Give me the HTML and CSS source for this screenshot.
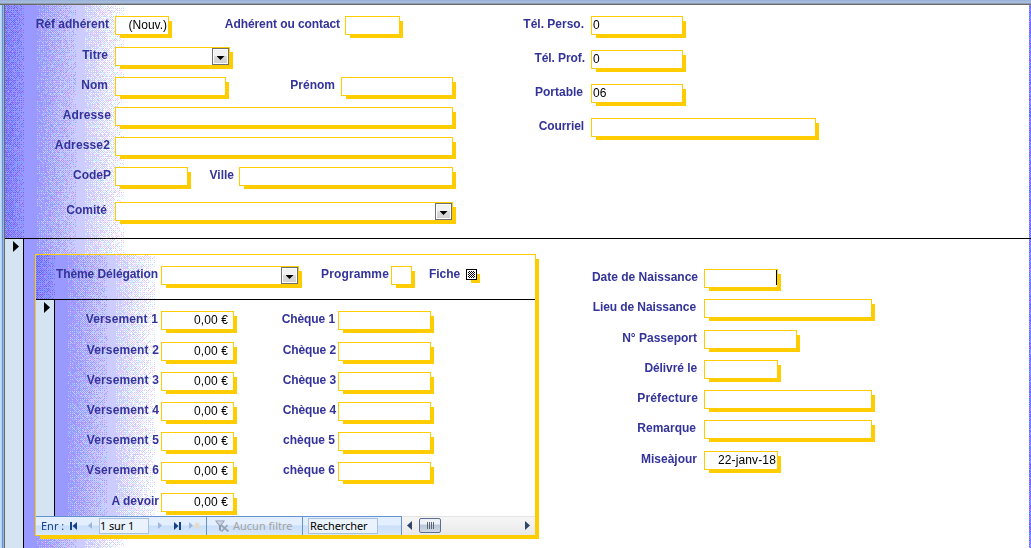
FILE: index.html
```
<!DOCTYPE html>
<html lang="fr">
<head>
<meta charset="utf-8">
<title>Adhérents</title>
<link rel="stylesheet" href="styles.css">
</head>
<body>
<div class="window">
  <div class="topbar"></div>
  <div class="middle">
    <div class="leftbar"></div>
    <main class="form">
      <canvas class="backdrop" width="1026" height="543"></canvas>
      <section class="head">
        <div class="identity">
          <div class="row c-ref"><label class="g6">Réf adhérent</label><span class="field right">(Nouv.)</span><label class="g5 tight">Adhérent ou contact</label><span class="field"></span></div>
          <div class="row c-titre"><label class="g7">Titre</label><span class="field combo"><i class="drop"></i></span></div>
          <div class="row c-nom"><label class="g7">Nom</label><span class="field"></span><label class="g6">Prénom</label><span class="field"></span></div>
          <div class="row c-wide"><label class="g4 loose">Adresse</label><span class="field"></span></div>
          <div class="row c-wide"><label class="g5 loose">Adresse2</label><span class="field"></span></div>
          <div class="row c-ville"><label class="g4">CodeP</label><span class="field"></span><label class="g5">Ville</label><span class="field"></span></div>
          <div class="row c-wide"><label class="g8">Comité</label><span class="field combo"><i class="drop"></i></span></div>
        </div>
        <div class="phones">
          <div class="row c-tel"><label class="g7">Tél. Perso.</label><span class="field">0</span></div>
          <div class="row c-tel"><label class="g6 tight">Tél. Prof.</label><span class="field">0</span></div>
          <div class="row c-tel"><label class="g8">Portable</label><span class="field">06</span></div>
          <div class="row c-mail"><label class="g7 tight">Courriel</label><span class="field"></span></div>
        </div>
      </section>
      <section class="detail">
        <div class="selector"><i class="arrow"></i></div>
        <div class="subform">
          <canvas class="backdrop" width="499" height="261"></canvas>
          <div class="subhead">
            <div class="row c-theme"><label class="g3 tight">Thème Délégation</label><span class="field combo"><i class="drop"></i></span><label class="g2 loose">Programme</label><span class="field"></span><label class="g6 tight">Fiche</label><span class="check"></span></div>
          </div>
          <div class="subbody">
            <div class="selector"><i class="arrow"></i></div>
            <div class="payments">
              <div class="row c-pay"><label class="g3 loose">Versement 1</label><span class="field money">0,00 €</span><label class="g3 tight">Chèque 1</label><span class="field"></span></div>
              <div class="row c-pay"><label class="g2 loose">Versement 2</label><span class="field money">0,00 €</span><label class="g2 tight">Chèque 2</label><span class="field"></span></div>
              <div class="row c-pay"><label class="g2 loose">Versement 3</label><span class="field money">0,00 €</span><label class="g2 tight">Chèque 3</label><span class="field"></span></div>
              <div class="row c-pay"><label class="g2 loose">Versement 4</label><span class="field money">0,00 €</span><label class="g2 tight">Chèque 4</label><span class="field"></span></div>
              <div class="row c-pay"><label class="g2 loose">Versement 5</label><span class="field money">0,00 €</span><label class="g3">chèque 5</label><span class="field"></span></div>
              <div class="row c-pay"><label class="g2 loose">Vserement 6</label><span class="field money">0,00 €</span><label class="g3">chèque 6</label><span class="field"></span></div>
              <div class="row c-pay"><label class="g2">A devoir</label><span class="field money">0,00 €</span></div>
            </div>
          </div>
          <div class="nav">
            <div class="cell records">
              <span class="enr">Enr :</span>
              <svg class="ic-first" width="7" height="8"><path d="M0 0h2v8H0zM7 0v8L2.5 4z" fill="#15428b"/></svg>
              <svg class="ic-prev" width="4" height="7"><path d="M4 0v7L0 3.5z" fill="#9db7dc"/></svg>
              <span class="pos">1 sur 1</span>
              <svg class="ic-next" width="4" height="7"><path d="M0 0v7l4-3.5z" fill="#9db7dc"/></svg>
              <svg class="ic-last" width="7" height="8"><path d="M5 0h2v8H5zM0 0v8l4.500-4z" fill="#15428b"/></svg>
              <svg class="ic-new" width="11" height="9"><path d="M0 1v7l4-3.500z" fill="#9db7dc"/><path d="M5 2l2 1 1-3 1 3 2-1-1 2.500 1 2.500-2-1-1 3-1-3-2 1 1-2.500z" fill="#e4dcc4"/></svg>
            </div>
            <div class="cell filter">
              <svg width="15" height="12"><path d="M0 .5h10L6 6v5.500L4 10V6z" fill="#8e9aac"/><path d="M1.500 1.300h7L5.500 5h-1z" fill="#c9d5e6"/><path d="M6 5l7.500 6.500M12.500 5L6.500 11.500" stroke="#98a2b2" stroke-width="1.700" fill="none"/></svg>
              <span>Aucun filtre</span>
            </div>
            <div class="cell search"><span class="query">Rechercher</span></div>
            <div class="scroll">
              <svg width="5" height="9"><path d="M5 0v9L0 4.500z" fill="#2f456b"/></svg>
              <span class="thumb"><i class="grip"></i></span>
              <svg class="to-right" width="5" height="9"><path d="M0 0v9l5-4.500z" fill="#2f456b"/></svg>
            </div>
          </div>
        </div>
        <div class="personal">
          <div class="row c-short"><label class="g6">Date de Naissance</label><span class="field right"><i class="caret"></i></span></div>
          <div class="row c-long"><label class="g8 tight">Lieu de Naissance</label><span class="field"></span></div>
          <div class="row c-mid"><label class="g7">N° Passeport</label><span class="field"></span></div>
          <div class="row c-short"><label class="g7 tight">Délivré le</label><span class="field"></span></div>
          <div class="row c-long"><label class="g6 loose">Préfecture</label><span class="field"></span></div>
          <div class="row c-long"><label class="g8">Remarque</label><span class="field"></span></div>
          <div class="row c-short"><label class="g7">Miseàjour</label><span class="field right loose">22-janv-18</span></div>
        </div>
      </section>
    </main>
  </div>
</div>
<script src="backdrop.js"></script>
</body>
</html>
```
FILE: styles.css
```
* { box-sizing: border-box; }
body {
  margin: 0;
  background: #fff;
  font: 12px/18px "Liberation Sans", Arial, sans-serif;
  color: #000;
}
.window { width: 1031px; height: 548px; overflow: hidden; display: flex; flex-direction: column; }
.topbar {
  height: 5px;
  background: linear-gradient(#9bb3d6 0 1px, #a4bbdb 1px 3px, #8f9cb2 3px 4px, #69696b 4px 5px);
}
.middle { flex: 1; display: flex; min-height: 0; }
.leftbar {
  width: 5px;
  background: linear-gradient(90deg, #bfdbff 0 1px, #b4d2f7 1px 2px, #6593cf 2px 3px, #9db4d2 3px 4px, #6a6a6c 4px 5px);
}
.form { flex: 1; display: flex; flex-direction: column; position: relative; isolation: isolate; }
.backdrop { position: absolute; left: 0; top: 0; z-index: -1; }

.head { height: 234px; border-bottom: 1px solid #000; display: flex; padding-top: 11px; gap: 54px; align-items: flex-start; }
.identity { width: 450px; display: grid; grid-template-rows: 31px 30px 30px 30px 30px 35px 19px; }
.phones { display: grid; grid-template-rows: 34px 34px 34px 19px; }

.row { display: grid; height: 19px; align-items: start; }
.c-ref { grid-template-columns: 110px 54px 176px 55px; }
.c-titre { grid-template-columns: 110px 115px; }
.c-nom { grid-template-columns: 110px 111px 115px 112px; }
.c-wide { grid-template-columns: 110px 338px; }
.c-ville { grid-template-columns: 110px 73px 51px 214px; }
.c-tel { grid-template-columns: 82px 92px; }
.c-mail { grid-template-columns: 82px 225px; }
.c-theme { grid-template-columns: 125px 138px 92px 21px 54px 11px; }
.c-pay { grid-template-columns: 106px 73px 104px 93px; }
.c-short { grid-template-columns: 125px 74px; }
.c-mid { grid-template-columns: 125px 93px; }
.c-long { grid-template-columns: 125px 168px; }

label { font-weight: bold; line-height: 16px; color: #333399; text-align: right; white-space: nowrap; }
.loose { letter-spacing: .14px; }
.tight { letter-spacing: -.08px; }
.g2 { padding-right: 2px; }
.g3 { padding-right: 3px; }
.g4 { padding-right: 4px; }
.g5 { padding-right: 5px; }
.g6 { padding-right: 6px; }
.g7 { padding-right: 7px; }
.g8 { padding-right: 8px; }

.field {
  height: 19px;
  padding: 0 1px;
  border: 1px solid #fc0;
  background: #fff;
  box-shadow: 4px 4px 0 -1px #fc0;
  line-height: 17px;
  white-space: nowrap;
}
.right { text-align: right; }
.money { text-align: right; padding-right: 5px; letter-spacing: .12px; }
.combo { display: flex; justify-content: flex-end; padding: 0; }
.drop {
  width: 17px;
  height: 17px;
  border: 1px solid #6f6f6f;
  box-shadow: inset 0 0 0 1px #fff;
  background: linear-gradient(#f2f2f2 50%, #dcdcdc 50%, #cfcfcf);
  display: grid;
  place-items: center;
  padding-top: 3px;
}
.drop::before { content: ""; width: 8px; height: 4px; background: #000; clip-path: polygon(0 0, 100% 0, 50% 100%); }
.check {
  width: 11px;
  height: 11px;
  margin-top: 3px;
  border: 1px solid #000;
  background: repeating-conic-gradient(#000 0 25%, #fff 0 50%) 0 0 / 2px 2px content-box, #fff;
  padding: 1px;
  box-shadow: 4px 4px 0 -1px #fc0;
}
.caret { display: block; width: 1px; height: 15px; margin: 0 -1px 0 auto; background: #000; }

.detail { flex: 1; display: flex; align-items: flex-start; }
.selector { width: 19px; align-self: stretch; border-right: 1px solid #000; background: #d5e4f2; }
.arrow { display: block; width: 6px; height: 11px; margin: 2px 0 0 8px; background: #000; clip-path: polygon(0 0, 100% 50%, 0 100%); }

.subform {
  width: 501px;
  height: 282px;
  margin: 15px 0 0 11px;
  border: 1px solid #fc0;
  box-shadow: 4px 4px 0 -1px #fc0;
  background: #fff;
  display: flex;
  flex-direction: column;
  position: relative;
  isolation: isolate;
}
.subhead { height: 45px; border-bottom: 1px solid #000; padding-top: 11px; }
.subbody { flex: 1; min-height: 0; display: flex; }
.payments { padding-top: 11px; display: grid; grid-template-rows: 31px 30px 30px 30px 30px 31px 19px; }
.personal { margin: 30px 0 0 43px; display: grid; grid-template-rows: 30px 31px 30px 30px 30px 31px 19px; }

.nav { height: 19px; display: flex; font: 11px/17px "Noto Sans", "Open Sans", sans-serif; }
.cell {
  border-top: 1px solid #6593cf;
  border-right: 1px solid #6593cf;
  background: linear-gradient(#e3efff 0 8px, #c9dffa 9px, #d9e8fb);
  display: flex;
  align-items: center;
  white-space: nowrap;
  padding-bottom: 1px;
}
.records { width: 171px; padding-left: 5px; color: #15428b; }
.enr { width: 29px; }
.ic-prev { margin-left: 11px; }
.pos { width: 50px; height: 16px; margin-left: 7px; border: 1px solid #a9c1de; background: #eaf2fb; line-height: 14px; color: #000; letter-spacing: -.1px; }
.ic-next { margin-left: 9px; }
.ic-last { margin-left: 12px; }
.ic-new { margin-left: 8px; }
.filter { width: 96px; padding-left: 8px; gap: 3px; color: #a7a39c; }
.search { width: 99px; padding-left: 5px; }
.query { width: 70px; height: 16px; padding-left: 1px; border: 1px solid #a9c1de; background: #eaf2fb; line-height: 14px; letter-spacing: -.1px; }
.scroll { flex: 1; padding: 0 5px 1px 5px; display: flex; align-items: center; border-top: 1px solid #e3e3e3; background: linear-gradient(#f6f6f6, #e9e9ea); }
.thumb { width: 22px; height: 15px; margin-left: 7px; border: 1px solid #5b6f94; border-radius: 2px; background: linear-gradient(#eef2f7 40%, #b9c6d8 45%, #cfd9e6); display: grid; place-items: center; }
.grip { width: 7px; height: 7px; background: repeating-linear-gradient(90deg, #5c6570 0 1px, transparent 1px 2px); }
.to-right { margin-left: auto; }
```
FILE: backdrop.js
```
// Fills each form backdrop with a horizontal violet-to-white fade,
// dithered between the web-safe levels 66, 99, CC and FF.
var seed = 7;
function noise() {
  seed = (seed * 1103515245 + 12345) % 2147483648;
  return seed / 2147483648;
}
var bayer = [0, 8, 2, 10, 12, 4, 14, 6, 3, 11, 1, 9, 15, 7, 13, 5];
function level(x) {
  if (x >= 1024) return level(x - 1024);
  if (x < 19) return [102, 0.45 + x / 45];
  if (x < 32) return [153, 0];
  if (x < 72) return [153, 0.06 + (x - 32) / 46];
  if (x < 80) return [204, 0];
  if (x < 119) return [204, 0.08 + (x - 80) / 45];
  return [255, 0];
}
document.querySelectorAll('.backdrop').forEach(function (canvas) {
  var g = canvas.getContext('2d');
  var img = g.createImageData(canvas.width, canvas.height);
  for (var y = 0; y < canvas.height; y++) {
    for (var x = 0; x < canvas.width; x++) {
      var l = level(x);
      var t = (bayer[(y % 4) * 4 + x % 4] + 0.5) / 16;
      var i = (y * canvas.width + x) * 4;
      for (var c = 0; c < 2; c++) {
        var n = t + (noise() - 0.5) * 0.6;
        img.data[i + c] = l[0] + (l[1] > n && l[1] > 0 ? 51 : 0);
      }
      img.data[i + 2] = 255;
      img.data[i + 3] = 255;
    }
  }
  g.putImageData(img, 0, 0);
});
```
